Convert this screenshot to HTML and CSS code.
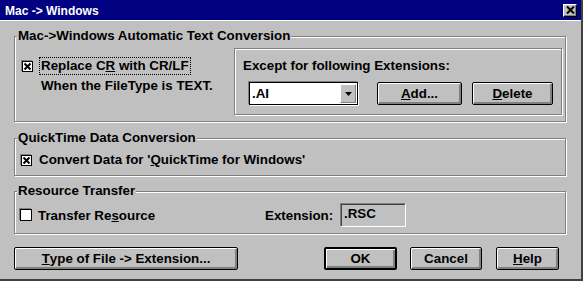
FILE: index.html
```html
<!DOCTYPE html>
<html>
<head>
<meta charset="utf-8">
<link rel="stylesheet" href="styles.css">
</head>
<body>
<div class="window">
  <div class="titlebar">
    <span class="title">Mac -&gt; Windows</span>
    <span class="close"><svg width="9" height="8" viewBox="0 0 9 8"><path d="M1 0.5 L8 7.5 M8 0.5 L1 7.5" stroke="#000" stroke-width="2"/></svg></span>
  </div>
  <div class="content">
    <div class="group g1">
      <div class="group-title">Mac-&gt;Windows Automatic Text Conversion</div>
      <div class="g1-row">
        <div class="g1-left">
          <div class="check-row">
            <span class="cb"><svg width="9" height="9" viewBox="0 0 9 9"><path d="M1.5 1.5 L7.5 7.5 M7.5 1.5 L1.5 7.5" stroke="#000" stroke-width="2"/></svg></span>
            <span class="focus">Replace C<u>R</u> with CR/LF</span>
          </div>
          <div class="note">When the FileType is TEXT.</div>
        </div>
        <div class="inner-box">
          <div class="except">Except for following Extensions:</div>
          <div class="ctrl-row">
            <div class="combo">
              <span class="combo-text">.AI</span>
              <span class="combo-btn"><svg width="7" height="4" viewBox="0 0 7 4"><path d="M0 0 H7 L3.5 4 Z" fill="#000"/></svg></span>
            </div>
            <div class="btn btn-add"><u>A</u>dd...</div>
            <div class="btn btn-del"><u>D</u>elete</div>
          </div>
        </div>
      </div>
    </div>

    <div class="group g2">
      <div class="group-title">QuickTime Data Conversion</div>
      <div class="g2-row">
        <span class="cb"><svg width="9" height="9" viewBox="0 0 9 9"><path d="M1.5 1.5 L7.5 7.5 M7.5 1.5 L1.5 7.5" stroke="#000" stroke-width="2"/></svg></span>
        <span class="g2-label">Convert Data for '<u>Q</u>uickTime for Windows'</span>
      </div>
    </div>

    <div class="group g3">
      <div class="group-title">Resource Transfer</div>
      <div class="g3-row">
        <div class="g3-left">
          <span class="cb cb-empty"></span>
          <span class="g3-label">Transfer Re<u>s</u>ource</span>
        </div>
        <span class="ext-label">Extension:</span>
        <span class="ext-box">.RSC</span>
      </div>
    </div>

    <div class="button-row">
      <div class="btn btn-type"><u>T</u>ype of File -&gt; Extension...</div>
      <div class="btn btn-ok default">OK</div>
      <div class="btn btn-cancel">Cancel</div>
      <div class="btn btn-help"><u>H</u>elp</div>
    </div>
  </div>
</div>
</body>
</html>
```

FILE: styles.css
```css
html, body {
  margin: 0;
  padding: 0;
  background: #c0c0c0;
}

.window {
  width: 583px;
  height: 281px;
  box-sizing: border-box;
  background: #c0c0c0;
  border-right: 2px solid #404040;
  border-bottom: 2px solid #404040;
  overflow: hidden;
  font-family: "Liberation Sans", Arial, sans-serif;
  font-weight: bold;
  font-size: 13.35px;
  color: #000;
}

.titlebar {
  height: 20px;
  background: #000080;
  border-bottom: 1px solid #fff;
  display: flex;
  align-items: center;
  justify-content: space-between;
}

.title {
  color: #fff;
  font-size: 12px;
  padding-left: 5px;
  padding-top: 1px;
}

.close {
  width: 14px;
  height: 13px;
  box-sizing: border-box;
  margin-right: 4px;
  background: #c0c0c0;
  border-top: 1px solid #fff;
  border-left: 1px solid #fff;
  border-right: 1px solid #000;
  border-bottom: 1px solid #000;
  box-shadow: inset -1px -1px 0 #808080;
  display: flex;
  align-items: center;
  justify-content: center;
}

.content {
  display: flex;
  flex-direction: column;
  padding-top: 15px;
}

.group {
  width: 552px;
  box-sizing: border-box;
  margin-left: 14px;
  border: 1px solid #808080;
  box-shadow: inset 1px 1px 0 #fff, 1px 1px 0 #fff;
}

.group-title {
  margin: -9px 0 0 2px;
  padding: 0 1px;
  background: #c0c0c0;
  width: max-content;
  line-height: 16px;
}

.g1 {
  padding-bottom: 6px;
  padding-right: 3px;
}

.g1-row {
  display: flex;
  margin-top: 4px;
}

.g1-left {
  width: 219px;
  display: flex;
  flex-direction: column;
}

.check-row {
  display: flex;
  align-items: center;
  margin-top: 9px;
  margin-left: 7px;
}

.cb {
  width: 11px;
  height: 11px;
  box-sizing: border-box;
  background: #fff;
  border: 1px solid #000;
  box-shadow: -1px -1px 0 #808080;
  display: flex;
  align-items: center;
  justify-content: center;
  flex: none;
}

.focus {
  margin-left: 6px;
  border: 1px dotted #000;
  padding: 0 1px;
  line-height: 16px;
}

.note {
  margin-top: 3px;
  padding-left: 26px;
  line-height: 16px;
}

.inner-box {
  width: 328px;
  height: 67px;
  box-sizing: border-box;
  border: 1px solid #808080;
  box-shadow: inset 1px 1px 0 #fff, 1px 1px 0 #fff;
  padding: 9px 0 0 8px;
}

.except {
  line-height: 16px;
}

.ctrl-row {
  display: flex;
  margin-top: 8px;
  margin-left: 6px;
}

.combo {
  width: 109px;
  height: 23px;
  box-sizing: border-box;
  background: #fff;
  border: 1px solid #000;
  box-shadow: -1px -1px 0 #808080, 1px 1px 0 #fff;
  display: flex;
  align-items: stretch;
}

.combo-text {
  flex: 1;
  padding-left: 2px;
  line-height: 21px;
}

.combo-btn {
  width: 16px;
  box-sizing: border-box;
  margin: 1px 1px 1px 0;
  background: #c0c0c0;
  border-top: 1px solid #fff;
  border-left: 1px solid #fff;
  border-right: 1px solid #808080;
  border-bottom: 1px solid #808080;
  display: flex;
  align-items: center;
  justify-content: center;
}

.btn {
  height: 23px;
  box-sizing: border-box;
  border: 1px solid #000;
  border-radius: 2px;
  background: #c0c0c0;
  box-shadow: inset 1px 1px 0 #fff, inset -2px -2px 0 #808080;
  display: flex;
  align-items: center;
  justify-content: center;
  line-height: 16px;
}

.btn.default {
  border-width: 2px;
  box-shadow: inset 1px 1px 0 #fff, inset -2px -2px 0 #808080;
}

.btn-add {
  width: 85px;
  margin-left: 19px;
}

.btn-del {
  width: 81px;
  margin-left: 10px;
}

.g2 {
  margin-top: 16px;
  padding-bottom: 7px;
}

.g2-row {
  display: flex;
  align-items: center;
  margin-top: 6px;
  margin-left: 6px;
  line-height: 16px;
}

.g2-label {
  margin-left: 7px;
}

.g3 {
  margin-top: 15px;
  padding-bottom: 6px;
}

.g3-row {
  display: flex;
  align-items: center;
  margin-top: 4px;
  height: 24px;
}

.g3-left {
  width: 250px;
  display: flex;
  align-items: center;
  padding-left: 5px;
  box-sizing: border-box;
}

.cb-empty {
  width: 12px;
  height: 12px;
}

.g3-label {
  margin-left: 6px;
}

.ext-label {
  width: 75px;
}

.ext-box {
  width: 66px;
  height: 24px;
  box-sizing: border-box;
  border-top: 1px solid #808080;
  border-left: 1px solid #808080;
  border-right: 1px solid #fff;
  border-bottom: 1px solid #fff;
  box-shadow: inset 1px 1px 0 #404040;
  padding-left: 3px;
  line-height: 20px;
}

.button-row {
  display: flex;
  margin-top: 13px;
  margin-left: 14px;
}

.btn-type {
  width: 224px;
}

.btn-ok {
  width: 73px;
  margin-left: 86px;
}

.btn-cancel {
  width: 72px;
  margin-left: 13px;
}

.btn-help {
  width: 63px;
  margin-left: 14px;
}
```
